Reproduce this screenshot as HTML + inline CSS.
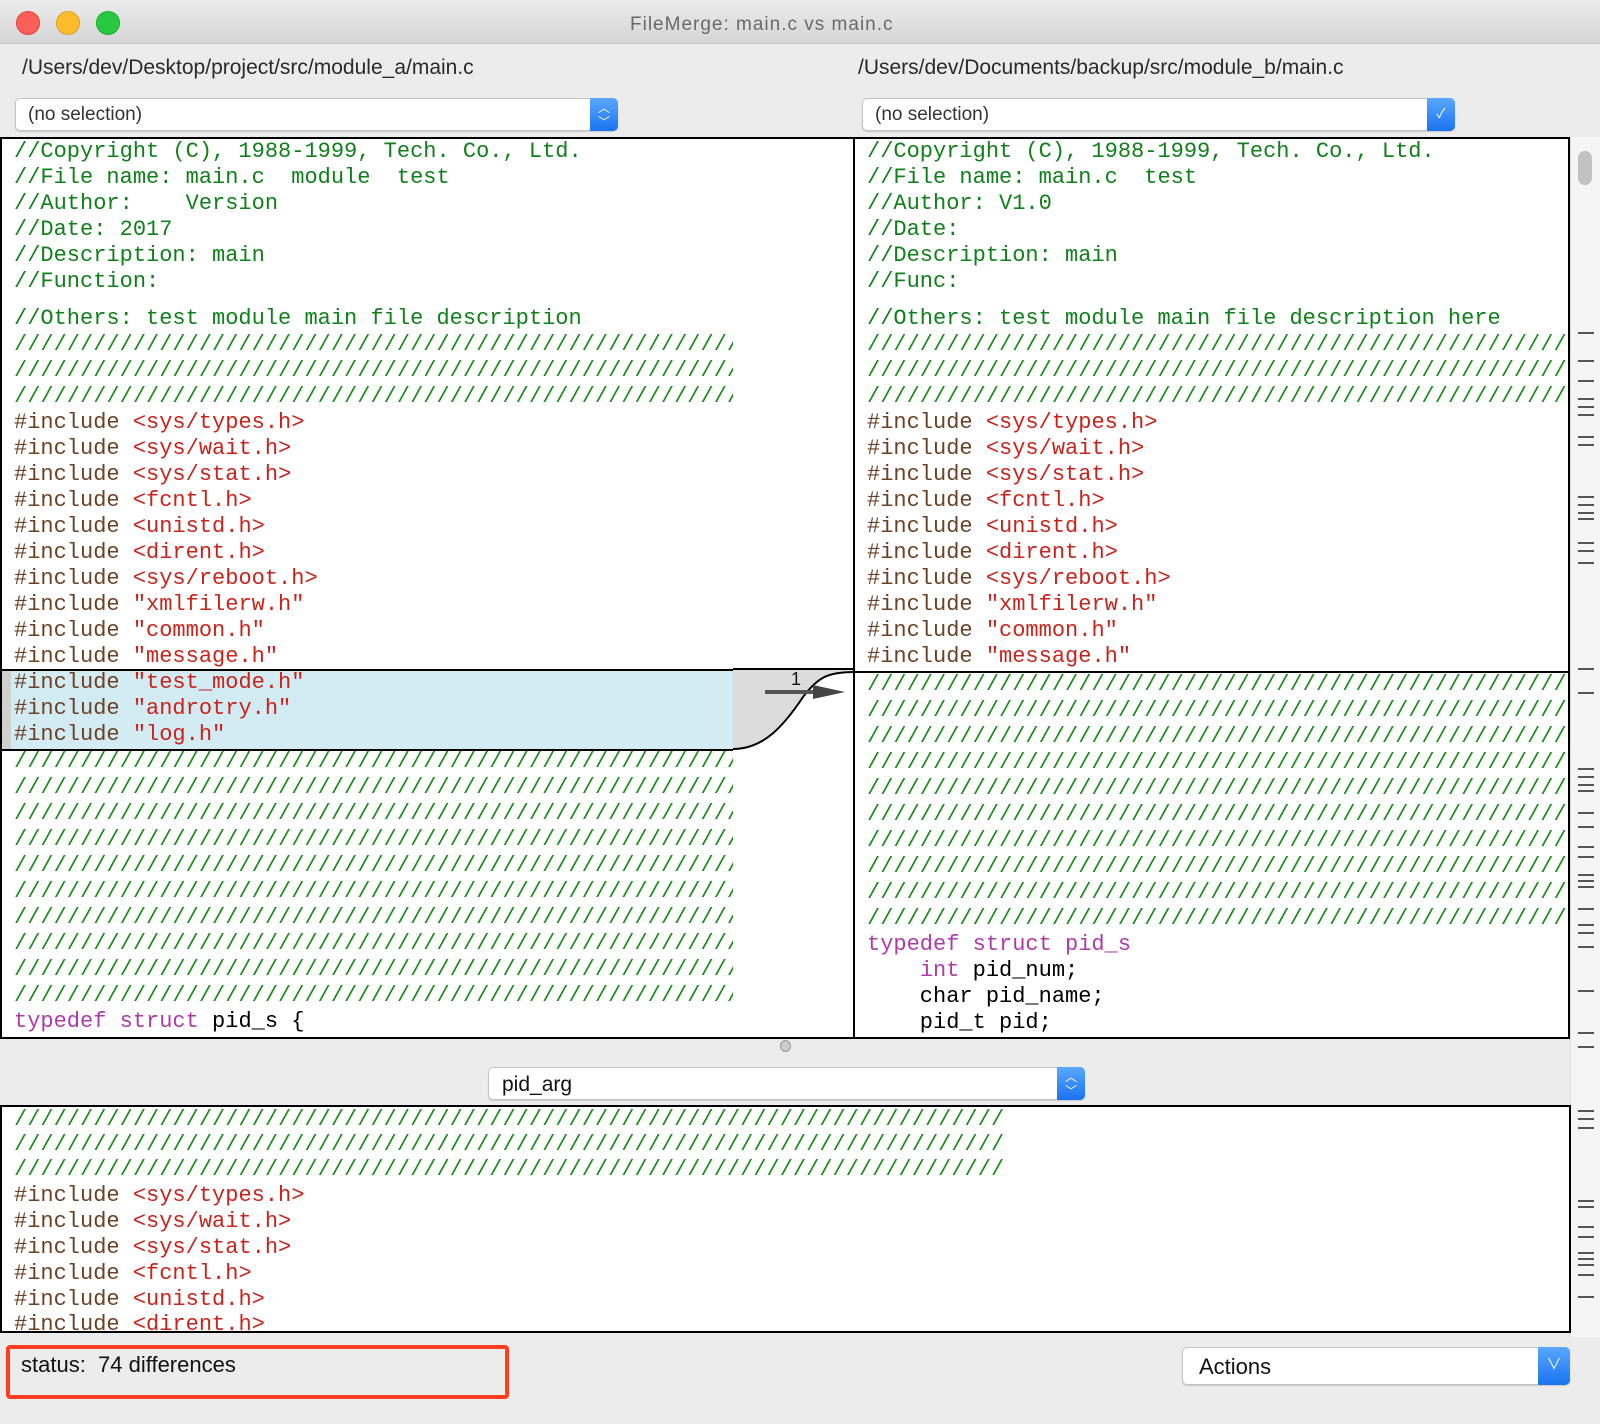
<!DOCTYPE html>
<html><head><meta charset="utf-8"><style>
*{margin:0;padding:0;box-sizing:border-box}
body{width:1600px;height:1424px;background:#ececec;position:relative;overflow:hidden;font-family:"Liberation Sans","Noto Sans CJK SC",sans-serif}
.abs{position:absolute}
.pane{position:absolute;background:#fff;border:2px solid #000;overflow:hidden}
.ln{position:absolute;left:12px;height:26px;line-height:26px;white-space:pre;font:22px "Liberation Mono",monospace;color:#6b4226}
.c{color:#10801a}.s{color:#c8241c}.m{color:#b03aa8}.k{color:#000}
.sl{color:#1a8a1a}
.dd{position:absolute;background:#fff;border:1px solid #c4c4c4;border-radius:5px;box-shadow:0 1px 1px rgba(0,0,0,.15)}
.ar{position:absolute;right:-1px;top:-1px;bottom:-1px;width:28px;background:linear-gradient(#5aa8ff,#1a73f0);border-radius:0 5px 5px 0;color:#fff;font-size:14px;text-align:center}
.tick{position:absolute;left:1578px;width:16px;height:2px;background:#555}
</style></head><body>
<div class="abs" style="left:0;top:0;width:1600px;height:44px;background:linear-gradient(#ebebeb,#d6d6d6);border-bottom:1px solid #c8c8c8"></div>
<div class="abs" style="left:16px;top:11px;width:24px;height:24px;border-radius:50%;background:#fc5f57;border:1px solid #e0443e"></div>
<div class="abs" style="left:56px;top:11px;width:24px;height:24px;border-radius:50%;background:#fdbc2e;border:1px solid #dea123"></div>
<div class="abs" style="left:96px;top:11px;width:24px;height:24px;border-radius:50%;background:#28c840;border:1px solid #1aab29"></div>
<div class="abs" style="left:630px;top:14px;font-size:19px;color:#6a6a6a;letter-spacing:1px">FileMerge: main.c vs main.c</div>
<div class="abs" style="left:22px;top:56px;font-size:21px;color:#2a2a2a">/Users/dev/Desktop/project/src/module_a/main.c</div>
<div class="abs" style="left:858px;top:56px;font-size:21px;color:#2a2a2a">/Users/dev/Documents/backup/src/module_b/main.c</div>
<div class="dd" style="left:15px;top:98px;width:603px;height:33px"><span class="abs" style="left:12px;top:5px;font-size:19px;color:#333">(no selection)</span><div class="ar" style="font-size:12px;line-height:14px;padding-top:3px">︿<br>﹀</div></div>
<div class="dd" style="left:862px;top:98px;width:593px;height:33px"><span class="abs" style="left:12px;top:5px;font-size:19px;color:#333">(no selection)</span><div class="ar" style="font-size:13px;line-height:32px">✓</div></div>

<div class="pane" style="left:0;top:137px;width:735px;height:902px">
<div class="abs" style="left:0;top:530px;width:735px;height:82px;background:#d3ebf3;border-top:2px solid #000;border-bottom:2px solid #000"></div>
<div class="abs" style="left:0;top:532px;width:9px;height:78px;background:#d0d0d0"></div>
<div class="ln c" style="top:0px">//Copyright (C), 1988-1999, Tech. Co., Ltd.</div>
<div class="ln c" style="top:26px">//File name: main.c  module  test</div>
<div class="ln c" style="top:52px">//Author:    Version</div>
<div class="ln c" style="top:78px">//Date: 2017</div>
<div class="ln c" style="top:104px">//Description: main</div>
<div class="ln c" style="top:130px">//Function:</div>
<div class="ln c" style="top:167px">//Others: test module main file description</div>
<div class="ln sl" style="top:193px">///////////////////////////////////////////////////////////</div>
<div class="ln sl" style="top:219px">///////////////////////////////////////////////////////////</div>
<div class="ln sl" style="top:245px">///////////////////////////////////////////////////////////</div>
<div class="ln" style="top:271px">#include <span class="s">&lt;sys/types.h&gt;</span></div>
<div class="ln" style="top:297px">#include <span class="s">&lt;sys/wait.h&gt;</span></div>
<div class="ln" style="top:323px">#include <span class="s">&lt;sys/stat.h&gt;</span></div>
<div class="ln" style="top:349px">#include <span class="s">&lt;fcntl.h&gt;</span></div>
<div class="ln" style="top:375px">#include <span class="s">&lt;unistd.h&gt;</span></div>
<div class="ln" style="top:401px">#include <span class="s">&lt;dirent.h&gt;</span></div>
<div class="ln" style="top:427px">#include <span class="s">&lt;sys/reboot.h&gt;</span></div>
<div class="ln" style="top:453px">#include <span class="s">"xmlfilerw.h"</span></div>
<div class="ln" style="top:479px">#include <span class="s">"common.h"</span></div>
<div class="ln" style="top:505px">#include <span class="s">"message.h"</span></div>
<div class="ln" style="top:531px">#include <span class="s">"test_mode.h"</span></div>
<div class="ln" style="top:557px">#include <span class="s">"androtry.h"</span></div>
<div class="ln" style="top:583px">#include <span class="s">"log.h"</span></div>
<div class="ln sl" style="top:610px">///////////////////////////////////////////////////////////</div>
<div class="ln sl" style="top:636px">///////////////////////////////////////////////////////////</div>
<div class="ln sl" style="top:662px">///////////////////////////////////////////////////////////</div>
<div class="ln sl" style="top:688px">///////////////////////////////////////////////////////////</div>
<div class="ln sl" style="top:714px">///////////////////////////////////////////////////////////</div>
<div class="ln sl" style="top:740px">///////////////////////////////////////////////////////////</div>
<div class="ln sl" style="top:766px">///////////////////////////////////////////////////////////</div>
<div class="ln sl" style="top:792px">///////////////////////////////////////////////////////////</div>
<div class="ln sl" style="top:818px">///////////////////////////////////////////////////////////</div>
<div class="ln sl" style="top:844px">///////////////////////////////////////////////////////////</div>
<div class="ln m" style="top:870px">typedef struct <span class="k">pid_s {</span></div>
</div>

<div class="abs" style="left:733px;top:137px;width:122px;height:902px;background:#fff;border-top:2px solid #000;border-bottom:2px solid #000"></div>
<svg class="abs" style="left:733px;top:137px" width="122" height="902">
<path d="M0 532 L122 532 L122 535 C95 535 85 540 70 560 C50 590 30 612 0 612 Z" fill="#dcdcdc"/>
<path d="M0 532 L122 532" stroke="#000" stroke-width="2"/>
<path d="M0 612 C30 612 50 590 70 560 C85 540 95 535 122 535" stroke="#000" stroke-width="2" fill="none"/>
<path d="M32 555 L90 555" stroke="#555" stroke-width="4"/>
<path d="M80 548 L112 555 L80 562 Z" fill="#444"/>
<text x="58" y="548" font-family="Liberation Sans" font-size="18" fill="#111">1</text>
</svg>

<div class="pane" style="left:853px;top:137px;width:717px;height:902px">
<div class="abs" style="left:0;top:532px;width:717px;height:2px;background:#000"></div>
<div class="ln c" style="top:0px">//Copyright (C), 1988-1999, Tech. Co., Ltd.</div>
<div class="ln c" style="top:26px">//File name: main.c  test</div>
<div class="ln c" style="top:52px">//Author: V1.0</div>
<div class="ln c" style="top:78px">//Date:</div>
<div class="ln c" style="top:104px">//Description: main</div>
<div class="ln c" style="top:130px">//Func:</div>
<div class="ln c" style="top:167px">//Others: test module main file description here</div>
<div class="ln sl" style="top:193px">///////////////////////////////////////////////////////////</div>
<div class="ln sl" style="top:219px">///////////////////////////////////////////////////////////</div>
<div class="ln sl" style="top:245px">///////////////////////////////////////////////////////////</div>
<div class="ln" style="top:271px">#include <span class="s">&lt;sys/types.h&gt;</span></div>
<div class="ln" style="top:297px">#include <span class="s">&lt;sys/wait.h&gt;</span></div>
<div class="ln" style="top:323px">#include <span class="s">&lt;sys/stat.h&gt;</span></div>
<div class="ln" style="top:349px">#include <span class="s">&lt;fcntl.h&gt;</span></div>
<div class="ln" style="top:375px">#include <span class="s">&lt;unistd.h&gt;</span></div>
<div class="ln" style="top:401px">#include <span class="s">&lt;dirent.h&gt;</span></div>
<div class="ln" style="top:427px">#include <span class="s">&lt;sys/reboot.h&gt;</span></div>
<div class="ln" style="top:453px">#include <span class="s">"xmlfilerw.h"</span></div>
<div class="ln" style="top:479px">#include <span class="s">"common.h"</span></div>
<div class="ln" style="top:505px">#include <span class="s">"message.h"</span></div>
<div class="ln sl" style="top:533px">///////////////////////////////////////////////////////////</div>
<div class="ln sl" style="top:559px">///////////////////////////////////////////////////////////</div>
<div class="ln sl" style="top:585px">///////////////////////////////////////////////////////////</div>
<div class="ln sl" style="top:611px">///////////////////////////////////////////////////////////</div>
<div class="ln sl" style="top:637px">///////////////////////////////////////////////////////////</div>
<div class="ln sl" style="top:663px">///////////////////////////////////////////////////////////</div>
<div class="ln sl" style="top:689px">///////////////////////////////////////////////////////////</div>
<div class="ln sl" style="top:715px">///////////////////////////////////////////////////////////</div>
<div class="ln sl" style="top:741px">///////////////////////////////////////////////////////////</div>
<div class="ln sl" style="top:767px">///////////////////////////////////////////////////////////</div>
<div class="ln m" style="top:793px">typedef struct pid_s</div>
<div class="ln k" style="top:819px">    <span class="m">int</span> pid_num;</div>
<div class="ln k" style="top:845px">    char pid_name;</div>
<div class="ln k" style="top:871px">    pid_t pid;</div>
</div>

<div class="abs" style="left:1570px;top:137px;width:30px;height:1200px;background:#f5f5f5;border-left:1px solid #ddd"></div>
<div class="abs" style="left:1578px;top:151px;width:14px;height:34px;border-radius:7px;background:#c2c2c2"></div>
<div class="tick" style="top:332px"></div><div class="tick" style="top:360px"></div><div class="tick" style="top:380px"></div>
<div class="tick" style="top:398px"></div><div class="tick" style="top:406px"></div><div class="tick" style="top:414px"></div><div class="tick" style="top:436px"></div><div class="tick" style="top:444px"></div>
<div class="tick" style="top:496px"></div><div class="tick" style="top:504px"></div><div class="tick" style="top:512px"></div><div class="tick" style="top:518px"></div>
<div class="tick" style="top:542px"></div><div class="tick" style="top:550px"></div><div class="tick" style="top:562px"></div>
<div class="tick" style="top:668px"></div><div class="tick" style="top:692px"></div>
<div class="tick" style="top:768px"></div><div class="tick" style="top:776px"></div><div class="tick" style="top:784px"></div><div class="tick" style="top:790px"></div>
<div class="tick" style="top:812px"></div><div class="tick" style="top:826px"></div><div class="tick" style="top:846px"></div><div class="tick" style="top:856px"></div>
<div class="tick" style="top:874px"></div><div class="tick" style="top:880px"></div><div class="tick" style="top:886px"></div>
<div class="tick" style="top:908px"></div><div class="tick" style="top:924px"></div><div class="tick" style="top:932px"></div><div class="tick" style="top:946px"></div>
<div class="tick" style="top:990px"></div><div class="tick" style="top:1032px"></div><div class="tick" style="top:1046px"></div>
<div class="tick" style="top:1110px"></div><div class="tick" style="top:1118px"></div><div class="tick" style="top:1127px"></div>
<div class="tick" style="top:1200px"></div><div class="tick" style="top:1206px"></div><div class="tick" style="top:1226px"></div><div class="tick" style="top:1236px"></div>
<div class="tick" style="top:1252px"></div><div class="tick" style="top:1258px"></div><div class="tick" style="top:1264px"></div><div class="tick" style="top:1274px"></div><div class="tick" style="top:1296px"></div>

<div class="abs" style="left:780px;top:1040px;width:11px;height:12px;border-radius:50%;background:#ccc;border:1px solid #999"></div>
<div class="dd" style="left:488px;top:1067px;width:597px;height:33px"><span class="abs" style="left:13px;top:5px;font-size:21px;color:#111">pid_arg</span><div class="ar" style="font-size:12px;line-height:14px;padding-top:3px">︿<br>﹀</div></div>

<div class="pane" style="left:0;top:1105px;width:1571px;height:228px">
<div class="ln sl" style="top:0px">///////////////////////////////////////////////////////////////////////////</div>
<div class="ln sl" style="top:25px">///////////////////////////////////////////////////////////////////////////</div>
<div class="ln sl" style="top:50px">///////////////////////////////////////////////////////////////////////////</div>
<div class="ln" style="top:76px">#include <span class="s">&lt;sys/types.h&gt;</span></div>
<div class="ln" style="top:102px">#include <span class="s">&lt;sys/wait.h&gt;</span></div>
<div class="ln" style="top:128px">#include <span class="s">&lt;sys/stat.h&gt;</span></div>
<div class="ln" style="top:154px">#include <span class="s">&lt;fcntl.h&gt;</span></div>
<div class="ln" style="top:180px">#include <span class="s">&lt;unistd.h&gt;</span></div>
<div class="ln" style="top:205px">#include <span class="s">&lt;dirent.h&gt;</span></div>
</div>

<div class="abs" style="left:6px;top:1345px;width:503px;height:54px;border:4px solid #ff3d1f;border-radius:4px"></div>
<div class="abs" style="left:21px;top:1352px;font-size:22px;color:#111">status:&nbsp; 74 differences</div>
<div class="dd" style="left:1182px;top:1347px;width:388px;height:38px"><span class="abs" style="left:16px;top:6px;font-size:22px;color:#111">Actions</span><div class="ar" style="width:32px;font-size:15px;line-height:36px">∨</div></div>
</body></html>
